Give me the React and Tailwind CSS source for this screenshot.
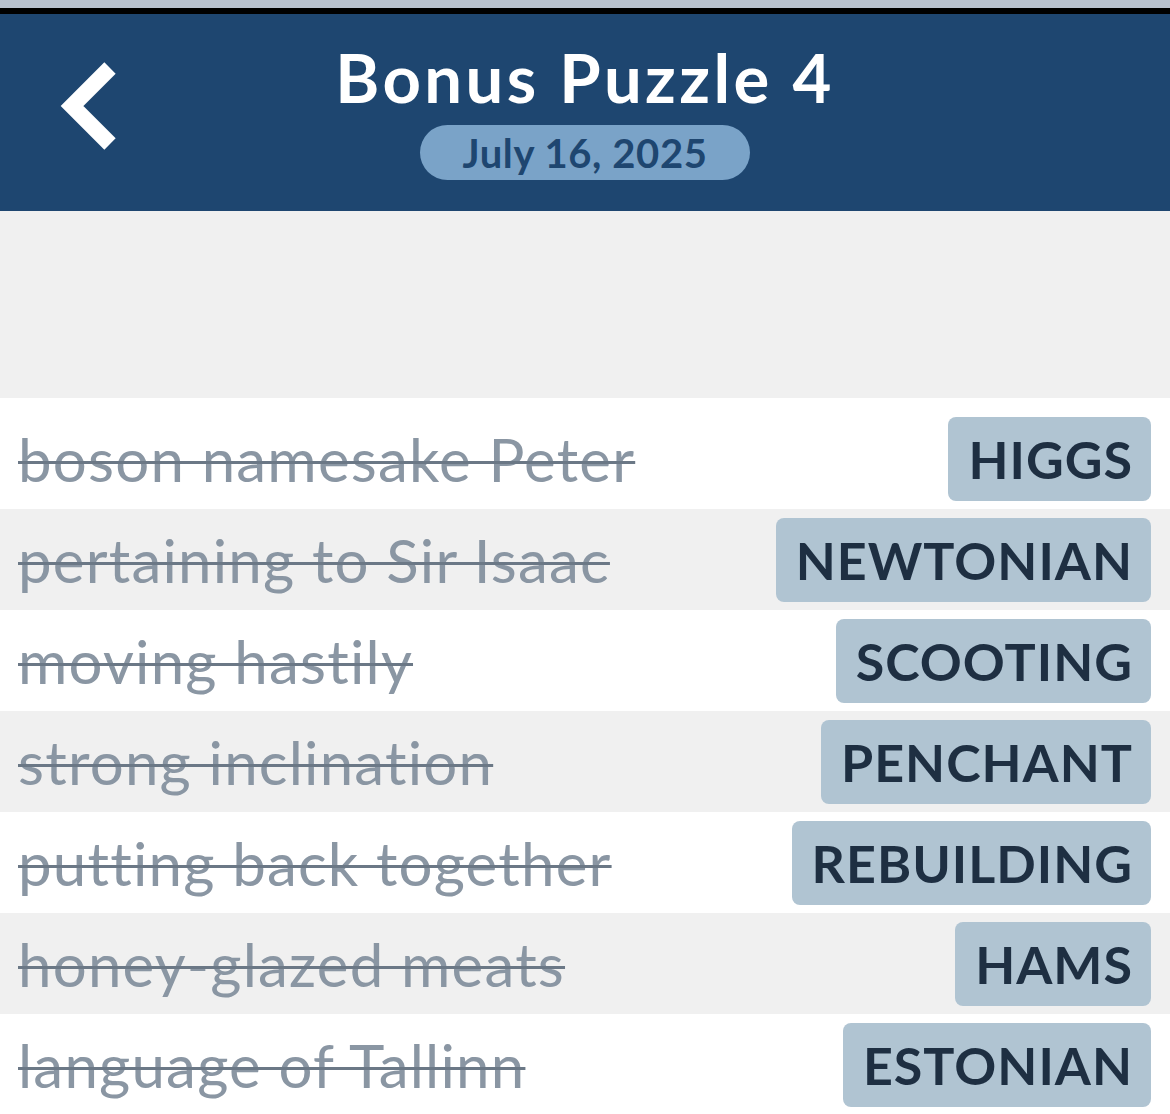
const clues = [
  { clue: "boson namesake Peter", answer: "HIGGS" },
  { clue: "pertaining to Sir Isaac", answer: "NEWTONIAN" },
  { clue: "moving hastily", answer: "SCOOTING" },
  { clue: "strong inclination", answer: "PENCHANT" },
  { clue: "putting back together", answer: "REBUILDING" },
  { clue: "honey-glazed meats", answer: "HAMS" },
  { clue: "language of Tallinn", answer: "ESTONIAN" },
];

const BackIcon = () => (
  <svg width="70" height="100" viewBox="0 0 70 100" fill="none">
    <path
      d="M60 12 L22 50 L60 88"
      stroke="white"
      strokeWidth="16"
      strokeLinecap="butt"
      strokeLinejoin="miter"
    />
  </svg>
);

export default function App() {
  return (
    <div className="w-[1170px] h-[1114px] overflow-hidden bg-[#f0f0f0] font-['Lato',sans-serif]">
      <div className="h-[8px] bg-[#b9c2cf]" />
      <div className="h-[6px] bg-black" />
      {/* header */}
      <div className="relative h-[197px] bg-[#1e4670] flex flex-col items-center">
        <div className="absolute left-[50px] top-[42px]">
          <BackIcon />
        </div>
        <h1 className="mt-[23px] text-[67px] leading-[80px] font-bold tracking-[3.4px] text-white">
          Bonus Puzzle 4
        </h1>
        <div className="mt-[8px] w-[330px] h-[55px] rounded-full bg-[#7aa3c8] flex items-center justify-center">
          <span className="text-[40px] font-bold tracking-[0.6px] text-[#1e4670]">
            July 16, 2025
          </span>
        </div>
      </div>
      <div className="h-[187px]" />
      {/* clue list */}
      <div className="bg-white pt-[10px]">
        {clues.map((item, index) => (
          <div
            key={index}
            className={
              "h-[101px] flex items-center justify-between pl-[18px] pr-[19px] " +
              (index % 2 === 0 ? "bg-white" : "bg-[#f0f0f0]")
            }
          >
            <span className="text-[60px] tracking-[1.2px] text-[#8a96a3] line-through decoration-[#6b7886] decoration-[3px]">
              {item.clue}
            </span>
            <span className="h-[84px] pl-[20px] pr-[18px] rounded-[8px] bg-[#b0c4d2] flex items-center text-[52px] font-bold tracking-[1px] text-[#1e2f42]">
              {item.answer}
            </span>
          </div>
        ))}
      </div>
    </div>
  );
}
